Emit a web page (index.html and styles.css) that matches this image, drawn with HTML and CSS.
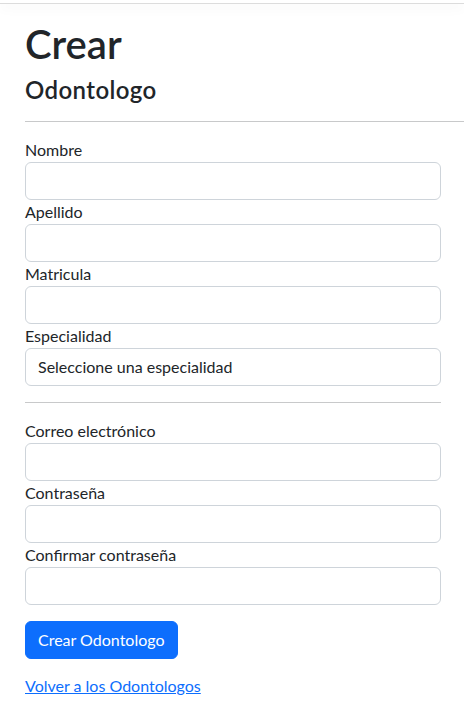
FILE: index.html
```html
<!DOCTYPE html>
<html lang="es">
<head>
<meta charset="utf-8">
<title>Crear Odontologo</title>
<link rel="stylesheet" href="styles.css">
</head>
<body>
<div class="topbar"></div>
<main class="page">
  <h1 class="title">Crear</h1>
  <h4 class="subtitle">Odontologo</h4>
  <hr class="rule rule-wide">
  <form class="form">
    <div class="field">
      <label class="field-label" for="nombre">Nombre</label>
      <input class="field-input" id="nombre" type="text">
    </div>
    <div class="field">
      <label class="field-label" for="apellido">Apellido</label>
      <input class="field-input" id="apellido" type="text">
    </div>
    <div class="field">
      <label class="field-label" for="matricula">Matricula</label>
      <input class="field-input" id="matricula" type="text">
    </div>
    <div class="field">
      <label class="field-label" for="especialidad">Especialidad</label>
      <select class="field-input field-select" id="especialidad">
        <option>Seleccione una especialidad</option>
      </select>
    </div>
    <hr class="rule">
    <div class="field">
      <label class="field-label" for="correo">Correo electrónico</label>
      <input class="field-input" id="correo" type="email">
    </div>
    <div class="field">
      <label class="field-label" for="pass">Contraseña</label>
      <input class="field-input" id="pass" type="password">
    </div>
    <div class="field">
      <label class="field-label" for="pass2">Confirmar contraseña</label>
      <input class="field-input" id="pass2" type="password">
    </div>
    <div class="actions">
      <button class="btn-primary" type="submit">Crear Odontologo</button>
    </div>
  </form>
  <div class="back">
    <a class="back-link" href="#">Volver a los Odontologos</a>
  </div>
</main>
</body>
</html>
```
FILE: styles.css
```css
* { box-sizing: border-box; }
html, body { margin: 0; padding: 0; background: #fff; }
body {
  font-family: Lato, "Liberation Sans", sans-serif;
  font-size: 16px;
  line-height: 1.5;
  color: #212529;
}
.topbar {
  height: 4px;
  border-bottom: 1px solid #dcdcdc;
  box-shadow: 0 4px 12px rgba(0,0,0,0.05);
  background: #fff;
}
.page {
  padding: 16px 0 0 25px;
}
.title {
  margin: 0 0 8px;
  font-size: 40px;
  font-weight: 600;
  line-height: 1.2;
}
.subtitle {
  margin: 0 0 8px;
  font-size: 24px;
  font-weight: 600;
  line-height: 1.2;
  letter-spacing: 0.4px;
}
.rule {
  margin: 16px 0;
  border: 0;
  border-top: 1px solid #c8c9ca;
  height: 0;
}
.form {
  width: 416px;
  margin: 0;
}
.field {
  display: flex;
  flex-direction: column;
}
.field-label {
  display: block;
  line-height: 24px;
}
.field-input {
  display: block;
  width: 100%;
  height: 38px;
  padding: 6px 12px;
  font: inherit;
  color: #212529;
  background: #fff;
  border: 1px solid #ced4da;
  border-radius: 6px;
  appearance: none;
  -webkit-appearance: none;
  outline: none;
}
.field-select { line-height: 24px; }
.actions { margin-top: 16px; }
.btn-primary {
  font: inherit;
  line-height: 24px;
  color: #fff;
  background: #0d6efd;
  border: 1px solid #0d6efd;
  border-radius: 6px;
  padding: 6px 12px;
}
.back { margin-top: 15px; }
.back-link {
  color: #0d6efd;
  text-decoration: underline;
}
```
